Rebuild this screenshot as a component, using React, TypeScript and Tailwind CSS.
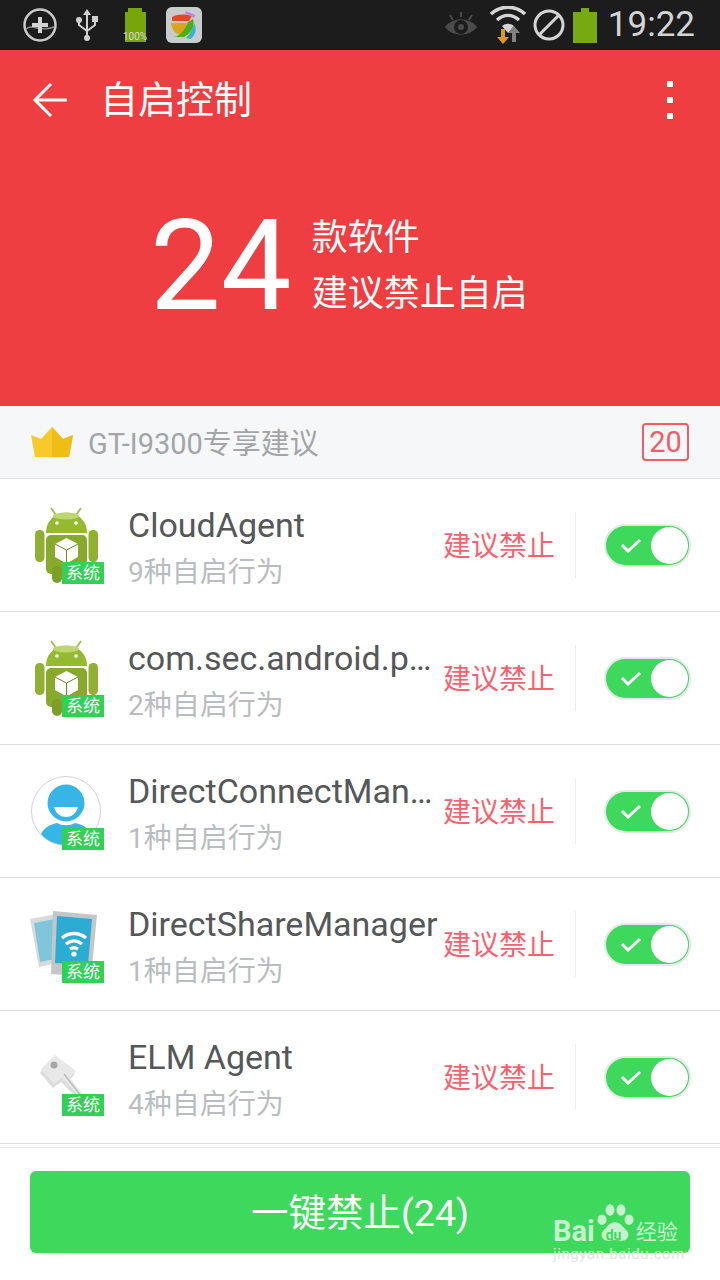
type AppRow = {
  name: string;
  count: string;
  icon: "android" | "person" | "share" | "key";
};

const rows: AppRow[] = [
  { name: "CloudAgent", count: "9种自启行为", icon: "android" },
  { name: "com.sec.android.p…", count: "2种自启行为", icon: "android" },
  { name: "DirectConnectMan…", count: "1种自启行为", icon: "person" },
  { name: "DirectShareManager", count: "1种自启行为", icon: "share" },
  { name: "ELM Agent", count: "4种自启行为", icon: "key" },
];

function AndroidIcon() {
  return (
    <svg className="ml-[1px]" width="70" height="78" viewBox="0 0 70 78">
      <path d="M21 2l5 7M51 2l-5 7" stroke="#a3bf4a" strokeWidth="1.8" />
      <path d="M16 27C16 0 57 0 57 27z" fill="#95ba30" />
      <ellipse cx="36" cy="10" rx="13" ry="3.5" fill="#bcd672" />
      <circle cx="27" cy="17" r="1.8" fill="#fff" />
      <circle cx="46" cy="17" r="1.8" fill="#fff" />
      <rect x="16" y="29" width="41" height="39" rx="5" fill="#87a92c" />
      <rect x="5" y="24" width="9.5" height="32" rx="4.5" fill="#8fb032" />
      <rect x="58.5" y="24" width="9.5" height="32" rx="4.5" fill="#8fb032" />
      <rect x="22" y="60" width="10" height="17" rx="5" fill="#7d9f28" />
      <rect x="41" y="60" width="10" height="17" rx="5" fill="#7d9f28" />
      <path d="M36.5 32l11.5 6v13l-11.5 6.500-11.500-6.500V38z" fill="#fff" />
      <path d="M25 38l11.500 6 11.500-6M36.500 44v13.500" stroke="#6d8a20" strokeWidth="1" fill="none" />
    </svg>
  );
}

function PersonIcon() {
  return (
    <svg className="ml-[2px]" width="70" height="70" viewBox="0 0 70 70">
      <circle cx="35" cy="35" r="34.500" fill="#fff" stroke="#d4d4d4" />
      <circle cx="35" cy="27" r="18.500" fill="#36b5e6" />
      <path d="M23 31h24c-2 7-7 10-12 10s-10-3-12-10z" fill="#fff" />
      <path d="M10 58c3-7 11-10 16-11 5 3 13 3 18 0 6 1 13 4 16 11-6 7-15 11-25 11s-19-4-25-11z" fill="#36b5e6" />
    </svg>
  );
}

function ShareIcon() {
  return (
    <svg width="70" height="66" viewBox="0 0 70 66">
      <path d="M1 8l26-5 6 48-23 5z" fill="#d8dadb" />
      <path d="M5 12l21-4 5 39-20 4z" fill="#7fc6dc" />
      <path d="M24 0l44 4-6 62-40-3z" fill="#c4c6c7" />
      <path d="M28 5l35 3-4 46-33-2z" fill="#2cacd3" />
      <g fill="none" stroke="#fff" strokeWidth="3.400">
        <path d="M33 27c7-6 17-6 24 0" />
        <path d="M37 33c5-4 11-4 16 0" />
        <path d="M41 38c3-2 5-2 8 0" />
      </g>
      <circle cx="45" cy="43" r="2.600" fill="#fff" />
    </svg>
  );
}

function KeyIcon() {
  return (
    <svg width="70" height="60" viewBox="0 0 70 60">
      <path d="M12 24L26 9l21 16-6 7 17 19-4 3-21-21-8 6z" fill="#bbbbbb" opacity="0.5" transform="translate(-1 2)" />
      <path d="M12 22L26 8l21 16-6 7 15 19-3 2-20-21-8 6z" fill="#e8e8e8" />
      <circle cx="25" cy="18" r="3.500" fill="#a6a6a6" />
      <path d="M35 27l17 22" stroke="#bdbdbd" strokeWidth="1.500" />
    </svg>
  );
}

function RowIcon({ icon }: { icon: AppRow["icon"] }) {
  return (
    <div className="relative flex h-[78px] w-[75px] shrink-0 items-center justify-start">
      {icon === "android" && <AndroidIcon />}
      {icon === "person" && <PersonIcon />}
      {icon === "share" && <ShareIcon />}
      {icon === "key" && <KeyIcon />}
      <span className="absolute bottom-0 right-0 bg-[#32d056] px-[4px] text-[17px] leading-[22px] text-white">
        系统
      </span>
    </div>
  );
}

function Toggle() {
  return (
    <div className="flex h-[43px] w-[87px] items-center justify-between rounded-full border-2 border-[#e6e8e8] bg-[#3ed95c] pl-[14px] pr-[1px]">
      <svg width="22" height="16" viewBox="0 0 22 16">
        <path d="M2 8l6 6L20 3" stroke="#fff" strokeWidth="3" fill="none" />
      </svg>
      <div className="h-[37px] w-[37px] rounded-full bg-white" />
    </div>
  );
}

function StatusBar() {
  return (
    <div className="flex h-[50px] items-center justify-between bg-[#1c1c1c] pl-[22px] pr-[25px]">
      <div className="flex items-center">
        <svg width="36" height="36" viewBox="0 0 36 36">
          <circle cx="18" cy="18" r="15.500" fill="none" stroke="#c9c9c9" strokeWidth="2.500" />
          <path d="M4 22c8-6 12 4 28-2" fill="none" stroke="#8a8a8a" strokeWidth="1.500" />
          <path d="M18 10v16M10 18h16" stroke="#d4d4d4" strokeWidth="4" />
        </svg>
        <svg className="ml-[17px]" width="24" height="36" viewBox="0 0 24 36">
          <path d="M12 2l4 6h-3v24h-2V8H8z" fill="#d0d0d0" />
          <circle cx="12" cy="31" r="3" fill="#d0d0d0" />
          <circle cx="4" cy="13" r="3" fill="#d0d0d0" />
          <rect x="17" y="9" width="6" height="6" fill="#d0d0d0" />
          <path d="M4 14v4l8 6M20 14v4l-8 6" stroke="#d0d0d0" strokeWidth="2" fill="none" />
        </svg>
        <div className="relative ml-[22px] h-[34px] w-[28px]">
          <div className="mx-auto h-[4px] w-[14px] bg-[#78a60a]" />
          <div className="mx-auto h-[30px] w-[21px] bg-[#78a60a]" />
          <span className="absolute bottom-[-1px] left-[-2px] right-[-2px] text-center text-[10px] leading-[12px] text-[#d8d8d8]">
            100%
          </span>
        </div>
        <svg className="ml-[17px]" width="36" height="36" viewBox="0 0 36 36">
          <rect width="36" height="36" rx="6" fill="#c9cccd" />
          <path d="M6 10c6-3 14-3 20-1l-3 5H6z" fill="#e04a1d" />
          <path d="M5 16h16l-4 12c-7 0-11-4-12-12z" fill="#dca31f" />
          <path d="M22 15l5-3c2 6-1 14-9 18H7c6 0 11-6 15-15z" fill="#4caf19" />
          <path d="M28 16c3 5 2 11-3 16l-5-1c4-4 7-9 8-15z" fill="#2fb4dc" />
          <path d="M20 4l9 4-1 3-9-5z" fill="#c97be0" />
        </svg>
      </div>
      <div className="flex items-center">
        <svg width="34" height="30" viewBox="0 0 34 30">
          <path d="M1 17C8 7 26 7 33 17 26 27 8 27 1 17z" fill="#4b4b4b" />
          <circle cx="17" cy="17" r="7" fill="#1c1c1c" />
          <circle cx="17" cy="17" r="3" fill="#4b4b4b" />
          <path d="M17 2v5M6 5l3 5M28 5l-3 5" stroke="#4b4b4b" strokeWidth="2" />
        </svg>
        <div className="relative ml-[12px] h-[38px] w-[36px]">
          <svg width="36" height="38" viewBox="0 0 36 38">
            <path d="M1 8c10-9 24-9 34 0" fill="none" stroke="#d4d4d4" strokeWidth="3.500" />
            <path d="M7 14c7-6 15-6 22 0" fill="none" stroke="#d4d4d4" strokeWidth="3.500" />
            <path d="M12 20c4-3 8-3 12 0l-6 7z" fill="#d4d4d4" />
            <path d="M11 23h4v8h4l-6 7-6-7h4z" fill="#dc9a1e" />
            <path d="M22 36v-9h-4l6-7 6 7h-4v9z" fill="#808080" />
          </svg>
        </div>
        <svg className="ml-[7px]" width="32" height="32" viewBox="0 0 32 32">
          <circle cx="16" cy="16" r="14" fill="none" stroke="#d4d4d4" strokeWidth="3" />
          <path d="M6 26L26 6" stroke="#d4d4d4" strokeWidth="3" />
        </svg>
        <div className="ml-[8px] w-[24px]">
          <div className="mx-auto h-[4px] w-[8px] bg-[#76a912]" />
          <div className="h-[31px] w-[24px] bg-[#76a912]" />
        </div>
        <span className="ml-[11px] text-[35px] leading-[50px] text-[#d4d4d4]">19:22</span>
      </div>
    </div>
  );
}

export default function App() {
  return (
    <div
      className="relative flex h-[1280px] w-[720px] flex-col overflow-hidden bg-white"
      style={{ fontFamily: 'Roboto, "Noto Sans CJK SC", sans-serif' }}
    >
      <StatusBar />

      <div className="flex h-[356px] flex-col bg-[#ef3e42] text-white">
        <div className="flex h-[100px] items-center justify-between pl-[32px] pr-[47px]">
          <div className="flex items-center">
            <svg width="36" height="36" viewBox="0 0 36 36">
              <path d="M3 18h32M19 2L3 18l16 16" fill="none" stroke="#fff" strokeWidth="3" />
            </svg>
            <h1 className="ml-[32px] text-[38px] leading-none">自启控制</h1>
          </div>
          <div className="flex flex-col gap-[10px]">
            <span className="h-[6px] w-[6px] bg-white" />
            <span className="h-[6px] w-[6px] bg-white" />
            <span className="h-[6px] w-[6px] bg-white" />
          </div>
        </div>
        <div className="mt-[46px] flex items-center pl-[150px]">
          <span className="text-[126px] leading-[140px]">24</span>
          <div className="ml-[20px] text-[36px] leading-[56px]">
            <p>款软件</p>
            <p>建议禁止自启</p>
          </div>
        </div>
      </div>

      <div className="flex h-[73px] shrink-0 items-center justify-between border-b border-[#dfe1e4] bg-[#f6f7f9] pl-[31px] pr-[31px]">
        <div className="flex items-center">
          <svg width="42" height="30" viewBox="0 0 42 30">
            <path d="M0 8l10 4L21 0l11 12 10-4-4 22H4z" fill="#f7c92b" />
            <path d="M21 0l11 12 10-4-4 22H21z" fill="#efbd14" />
          </svg>
          <span className="ml-[15px] pt-[4px] text-[29px] leading-none text-[#a3a5a7]">GT-I9300专享建议</span>
        </div>
        <span className="flex h-[38px] w-[47px] items-center justify-center rounded-[4px] border-2 border-[#f45d68] text-[29px] leading-none text-[#f45d68]">
          20
        </span>
      </div>

      {rows.map((row) => (
        <div
          key={row.name}
          className="flex h-[133px] shrink-0 items-center border-b border-[#dcdcdc] pl-[29px] pr-[29px]"
        >
          <RowIcon icon={row.icon} />
          <div className="ml-[24px] w-[315px] shrink-0 pt-[7px]">
            <p className="whitespace-nowrap text-[34px] leading-[44px] text-[#555759]">{row.name}</p>
            <p className="mt-[4px] text-[28px] leading-[44px] text-[#b9bdc1]">{row.count}</p>
          </div>
          <span className="w-[132px] shrink-0 whitespace-nowrap pt-[4px] text-[28px] text-[#f8626f]">建议禁止</span>
          <div className="h-[66px] w-px shrink-0 bg-[#ececec]" />
          <div className="ml-[28px]">
            <Toggle />
          </div>
        </div>
      ))}

      <div className="mt-[3px] flex flex-1 items-start border-t border-[#e8e8e8] px-[30px] pt-[23px]">
        <button className="h-[82px] w-full rounded-[6px] bg-[#3ed95c] pt-[2px] text-[37.500px] text-white">一键禁止(24)</button>
      </div>

      {/* watermark */}
      <div className="absolute left-[553px] top-[1205px] flex flex-col items-start text-[#c6f2ce]">
        <div className="flex items-end">
          <span className="mb-[-5px] text-[29px] font-bold leading-[38px]">Bai</span>
          <div className="relative ml-[1px] h-[40px] w-[38px]">
            <svg width="38" height="42" viewBox="0 0 38 48" preserveAspectRatio="none" className="absolute bottom-0 left-0">
              <ellipse cx="6" cy="19" rx="4.500" ry="6" fill="#c6f2ce" />
              <ellipse cx="14" cy="8" rx="4.500" ry="6.500" fill="#c6f2ce" />
              <ellipse cx="25" cy="8" rx="4.500" ry="6.500" fill="#c6f2ce" />
              <ellipse cx="33" cy="19" rx="4.500" ry="6" fill="#c6f2ce" />
              <path d="M19 22c6 0 8 6 12 10 4 6-1 12-6 11-4-1-8-1-12 0-5 1-10-5-6-11 4-4 6-10 12-10z" fill="#c6f2ce" />
            </svg>
            <span className="absolute bottom-[2px] left-[10px] text-[14px] font-bold leading-[16px] text-[#3ed95c]">du</span>
          </div>
          <span className="mb-[-5px] ml-[2px] text-[21px] leading-[36px]">经验</span>
        </div>
        <span className="mt-[2px] text-[15px] leading-[14px] tracking-[0.6px] text-[#e4e4e4]">jingyan.baidu.com</span>
      </div>
    </div>
  );
}
